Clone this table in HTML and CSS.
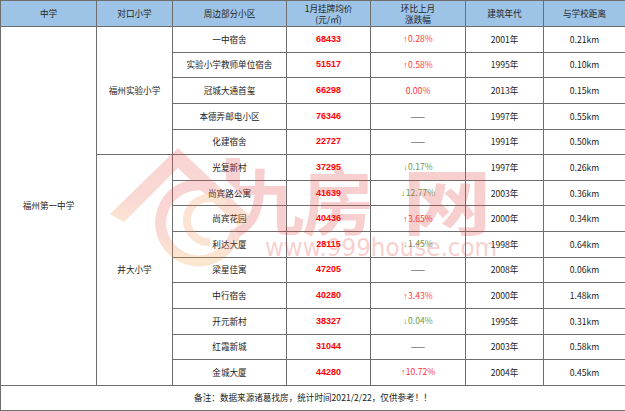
FILE: index.html
```html
<!DOCTYPE html>
<html lang="zh">
<head>
<meta charset="utf-8">
<link rel="stylesheet" href="styles.css">
</head>
<body>
<div class="wrap">
<table class="tbl">
<colgroup>
<col class="c1"><col class="c2"><col class="c3"><col class="c4"><col class="c5"><col class="c6"><col class="c7">
</colgroup>
<thead>
<tr class="head">
<th>中学</th><th>对口小学</th><th>周边部分小区</th><th class="two">1月挂牌均价<br>(元/㎡)</th><th class="two">环比上月<br>涨跌幅</th><th>建筑年代</th><th>与学校距离</th>
</tr>
</thead>
<tbody>
<tr><td rowspan="14">福州第一中学</td><td rowspan="5">福州实验小学</td><td>一中宿舍</td><td class="price">68433</td><td class="up"><span class="ar">↑</span>0.28%</td><td>2001年</td><td>0.21km</td></tr>
<tr><td>实验小学教师单位宿舍</td><td class="price">51517</td><td class="up"><span class="ar">↑</span>0.58%</td><td>1995年</td><td>0.10km</td></tr>
<tr><td>冠城大通首玺</td><td class="price">66298</td><td class="up">0.00%</td><td>2013年</td><td>0.15km</td></tr>
<tr><td>本德弄邮电小区</td><td class="price">76346</td><td class="dash">——</td><td>1997年</td><td>0.55km</td></tr>
<tr><td>化建宿舍</td><td class="price">22727</td><td class="dash">——</td><td>1991年</td><td>0.50km</td></tr>
<tr><td rowspan="9">井大小学</td><td>光复新村</td><td class="price">37295</td><td class="down"><span class="ar">↓</span>0.17%</td><td>1997年</td><td>0.26km</td></tr>
<tr><td>尚宾路公寓</td><td class="price">41639</td><td class="down"><span class="ar">↓</span>12.77%</td><td>2003年</td><td>0.36km</td></tr>
<tr><td>尚宾花园</td><td class="price">40436</td><td class="up"><span class="ar">↑</span>3.65%</td><td>2000年</td><td>0.34km</td></tr>
<tr><td>利达大厦</td><td class="price">28115</td><td class="down"><span class="ar">↓</span>1.45%</td><td>1998年</td><td>0.64km</td></tr>
<tr><td>梁星佳寓</td><td class="price">47205</td><td class="dash">——</td><td>2008年</td><td>0.06km</td></tr>
<tr><td>中行宿舍</td><td class="price">40280</td><td class="up"><span class="ar">↑</span>3.43%</td><td>2000年</td><td>1.48km</td></tr>
<tr><td>开元新村</td><td class="price">38327</td><td class="down"><span class="ar">↓</span>0.04%</td><td>1995年</td><td>0.31km</td></tr>
<tr><td>红霞新城</td><td class="price">31044</td><td class="dash">——</td><td>2003年</td><td>0.58km</td></tr>
<tr><td>金城大厦</td><td class="price">44280</td><td class="up"><span class="ar">↑</span>10.72%</td><td>2004年</td><td>0.45km</td></tr>
<tr class="foot"><td colspan="7">备注：数据来源诸葛找房，统计时间2021/2/22，仅供参考！！</td></tr>
</tbody>
</table>
<svg class="mark" width="625" height="411" viewBox="0 0 625 411">
<defs>
<linearGradient id="roofg" x1="0" y1="0" x2="0" y2="1">
<stop offset="0" stop-color="#e84a4a"/>
<stop offset="0.7" stop-color="#ec6a50"/>
<stop offset="1" stop-color="#f2a040"/>
</linearGradient>
</defs>
<g opacity="0.24">
<path d="M110 214 L178 148 L250 216 L238 226 L178 168 L124 222 Z" fill="url(#roofg)"/>
<path d="M226 180 L226 158 L240 158 L240 194 Z" fill="#e84a4a"/>
<path d="M236 230 A38 38 0 1 1 214 188" fill="none" stroke="url(#roofg)" stroke-width="11"/>
<path d="M210 242 A22 22 0 1 1 224 204" fill="none" stroke="#f0904a" stroke-width="8"/>
<text x="268" y="229" class="wm-cn" text-anchor="middle">九</text>
<text x="338" y="229" class="wm-cn" text-anchor="middle">房</text>
<text x="447" y="229" class="wm-cn" text-anchor="middle" transform="translate(447 0) scale(1.25 1) translate(-447 0)">网</text>
<text x="265" y="256" class="wm-en" textLength="232" lengthAdjust="spacingAndGlyphs">www.999house.com</text>
</g>
</svg>
</div>
</body>
</html>
```
FILE: styles.css
```css
html, body {
  margin: 0;
  padding: 0;
  background: #ffffff;
}
.wrap {
  position: relative;
  width: 625px;
  height: 411px;
  overflow: hidden;
}
.tbl {
  border-collapse: collapse;
  table-layout: fixed;
  width: 625px;
  font-family: "Noto Sans CJK SC", "Microsoft YaHei", sans-serif;
  font-size: 8.6px;
  color: #222222;
}
.c1 { width: 96px; }
.c2 { width: 76px; }
.c3 { width: 114px; }
.c4 { width: 84px; }
.c5 { width: 95px; }
.c6 { width: 78px; }
.c7 { width: 82px; }
.tbl th, .tbl td {
  border: 1px solid #6e6e6e;
  text-align: center;
  vertical-align: middle;
  padding: 0;
  line-height: 11px;
}
.tbl th {
  background: #9dc3e6;
  font-weight: normal;
  color: #1e1e1e;
}
.head { height: 26px; }
.tbl tbody tr { height: 25.64px; }
.tbl tbody tr.foot { height: 25px; }
.price {
  color: #ff0000;
  font-weight: bold;
  font-family: "Liberation Sans", "Noto Sans CJK SC", sans-serif;
  font-size: 9px;
}
.up { color: #ff3b3b; }
.down { color: #6f9a4e; }
.ar {
  font-family: "Liberation Sans", sans-serif;
  margin-right: 0.5px;
}
.dash { color: #333333; }
.mark {
  position: absolute;
  left: 0;
  top: 0;
  pointer-events: none;
}
.wm-cn {
  font-family: "Noto Sans CJK SC", sans-serif;
  font-size: 72px;
  font-weight: bold;
  fill: #e53c3c;
}
.wm-en {
  font-family: "DejaVu Sans", sans-serif;
  font-size: 25px;
  fill: #e53c3c;
}
```
